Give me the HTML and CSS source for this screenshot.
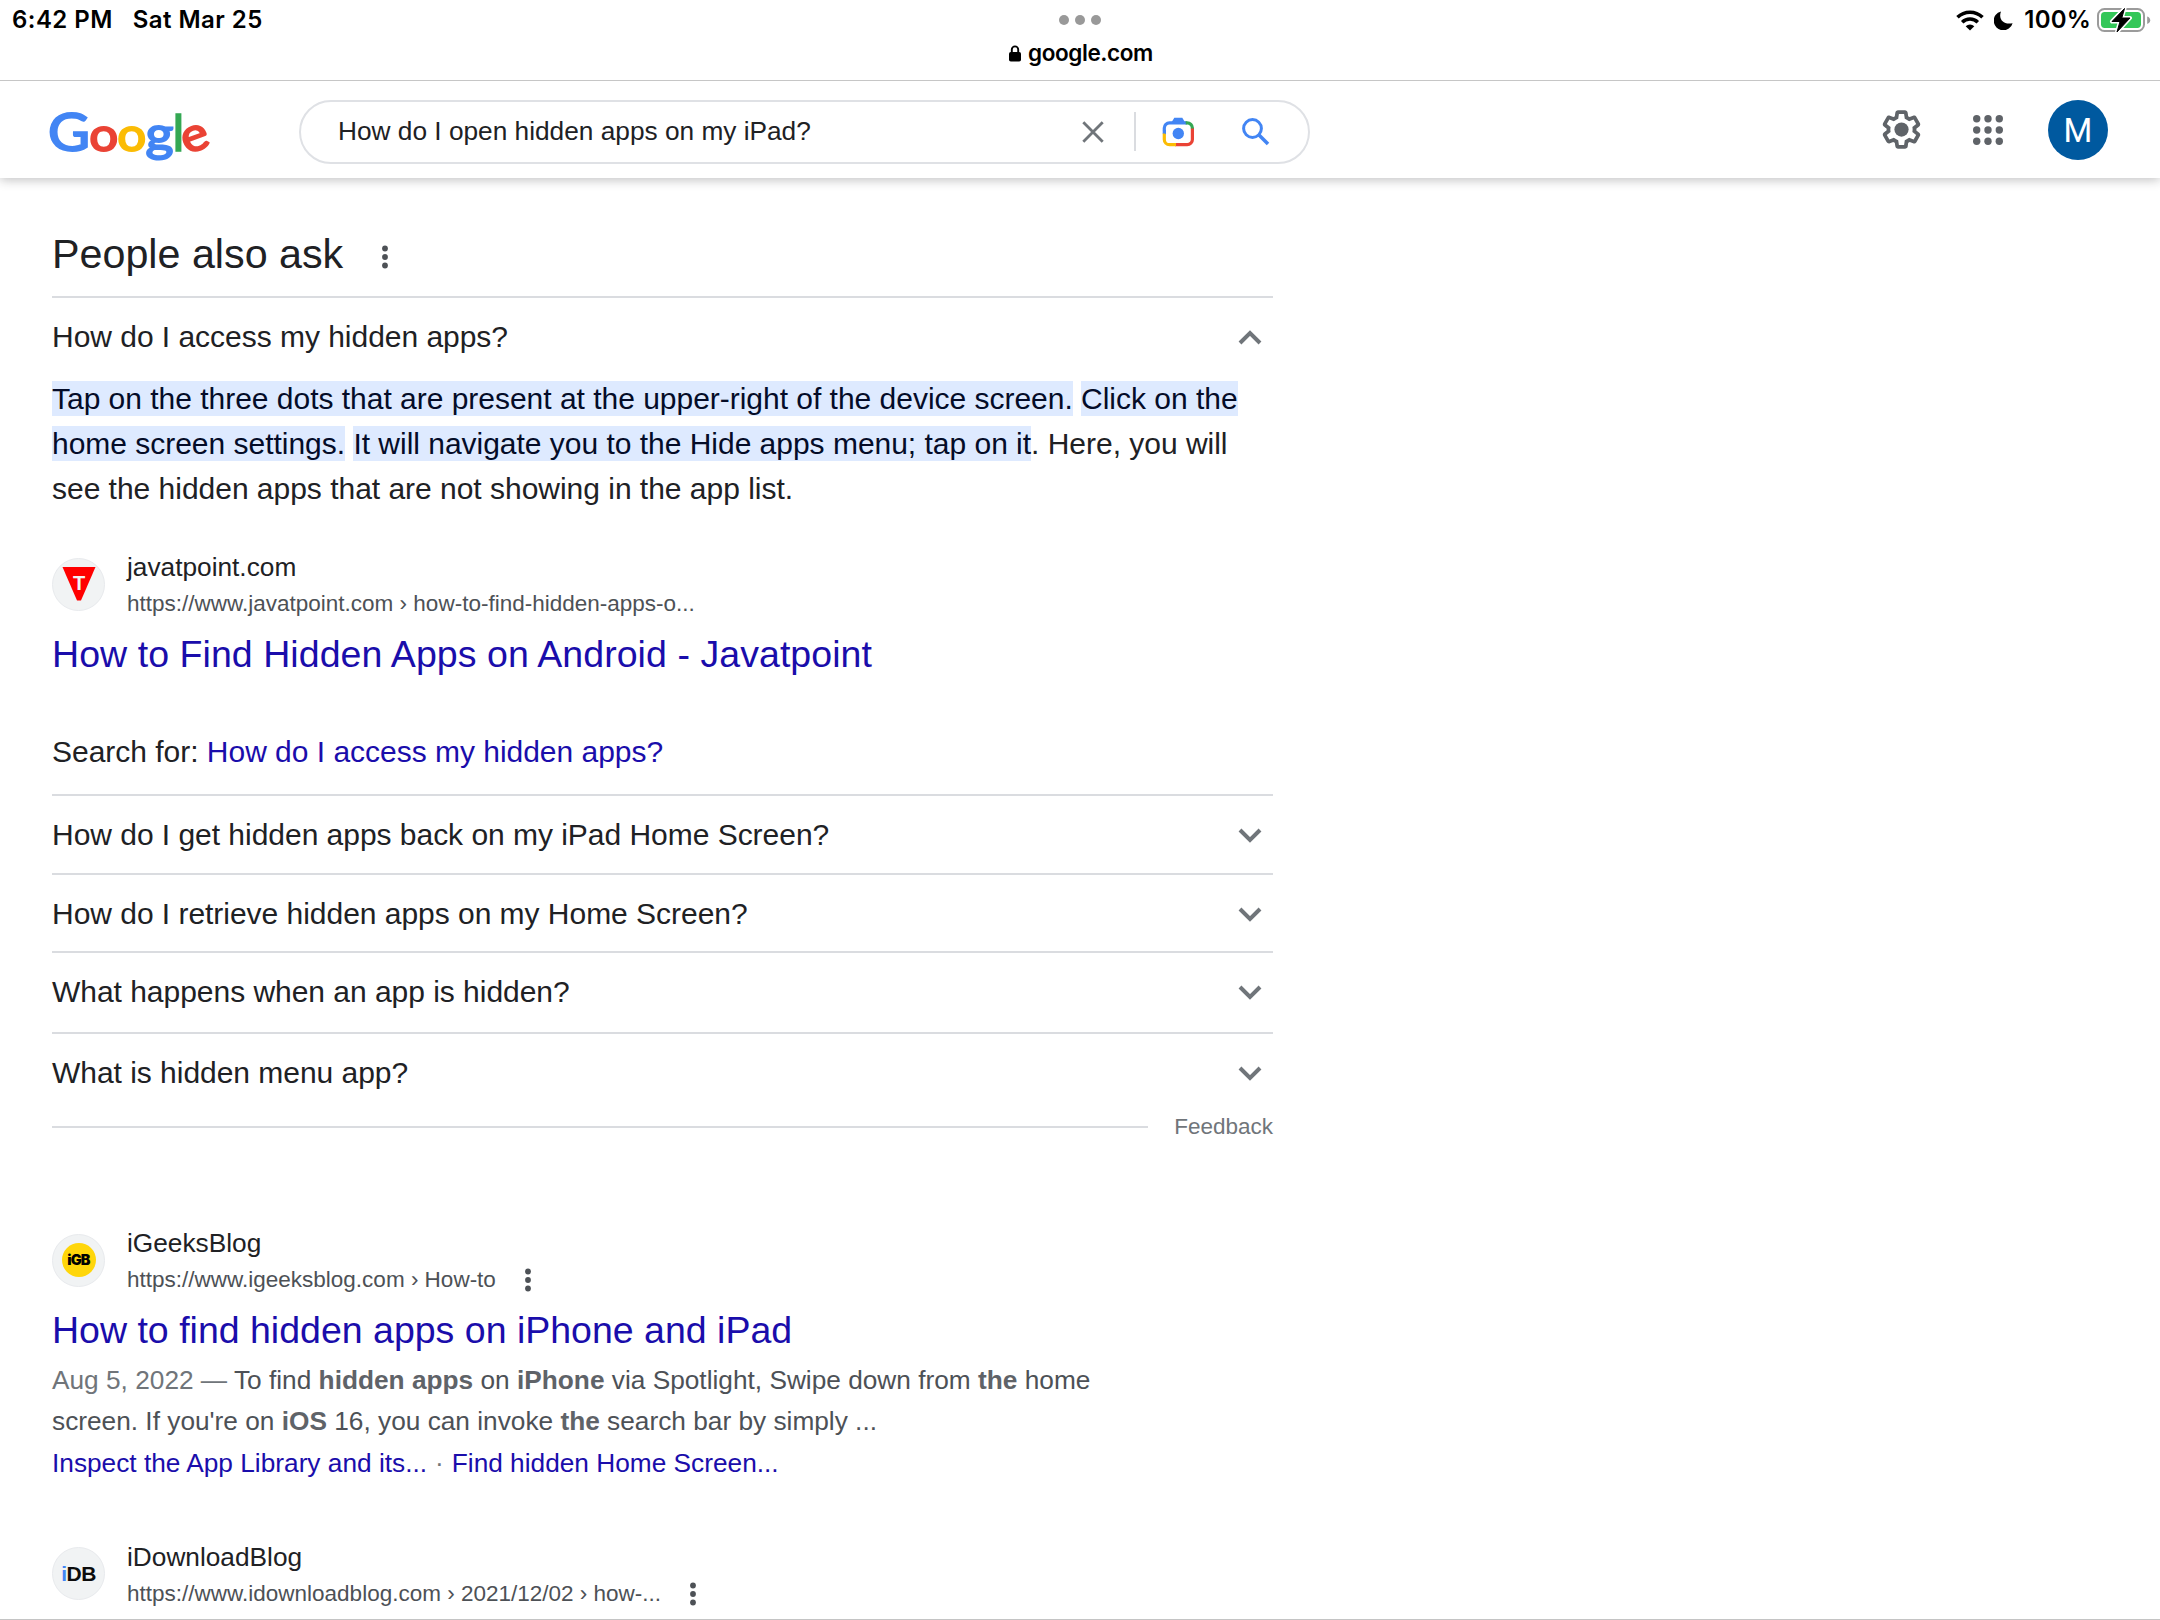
FILE: index.html
```html
<!DOCTYPE html>
<html lang="en">
<head>
<meta charset="utf-8">
<title>How do I open hidden apps on my iPad? - Google Search</title>
<link rel="stylesheet" href="styles.css">
</head>
<body>
<div class="screen">
  <div class="browser-bar">
    <div class="clock"><span>6:42 PM</span><span>Sat Mar 25</span></div>
    <div class="address">
      <div class="tab-dots"><i></i><i></i><i></i></div>
      <div class="site">
        <svg class="lock" width="12" height="17" viewBox="0 0 12 17"><path d="M2.8 8V4.6a3.2 3.2 0 0 1 6.4 0V8" fill="none" stroke="#000" stroke-width="1.9"/><rect x="0" y="7" width="12" height="9.6" rx="1.8"/></svg>
        <span>google.com</span>
      </div>
    </div>
    <div class="indicators">
      <svg class="wifi" width="28" height="21" viewBox="0 0 28 21"><g fill="none" stroke="#000" stroke-width="3.5"><path d="M1.5 7.3a17.7 17.7 0 0 1 25 0"/><path d="M6.2 12.2a11 11 0 0 1 15.6 0"/></g><path d="M14 20.6 9.7 16.3a6.1 6.1 0 0 1 8.6 0z"/></svg>
      <svg class="moon" width="19" height="19" viewBox="0 0 19 19"><path d="M7 .4C4 8 9.500 14.300 18.600 12.200A9.600 9.600 0 1 1 7 .4z"/></svg>
      <span class="charge">100%</span>
      <svg class="battery" width="54" height="26" viewBox="0 0 54 26"><rect x="1" y="2" width="46" height="22" rx="6.500" fill="none" stroke="#9b9b9b" stroke-width="2"/><path d="M50.200 9.500q3 1 3 3.700t-3 3.700z" fill="#9b9b9b"/><rect x="4" y="5" width="40" height="16" rx="3.700" fill="#34c759"/><path d="M27.500 1.500 15 14.500h8L20 25 33 11h-8.200z" stroke="#fff" stroke-width="4" stroke-linejoin="round"/><path d="M27.500 1.500 15 14.500h8L20 25 33 11h-8.200z" stroke="#000" stroke-width="1" stroke-linejoin="round"/></svg>
    </div>
  </div>

  <header class="header">
    <svg class="logo" width="162" height="60" viewBox="0 0 162 60" role="img" aria-label="Google">
      <text class="logo-cap c-blue" x="-2" y="44.500" textLength="42" lengthAdjust="spacingAndGlyphs">G</text>
      <text class="logo-low c-red" x="39.300" y="44.500" textLength="29" lengthAdjust="spacingAndGlyphs">o</text>
      <text class="logo-low c-yellow" x="67.300" y="44.500" textLength="29" lengthAdjust="spacingAndGlyphs">o</text>
      <text class="logo-g c-blue" x="95.500" y="44.500" textLength="28" lengthAdjust="spacingAndGlyphs">g</text>
      <text class="logo-l c-green" x="122.500" y="45">l</text>
      <text class="logo-low c-red" x="131.500" y="44.500" textLength="27" lengthAdjust="spacingAndGlyphs" transform="rotate(-20 145.500 32.500)">e</text>
    </svg>
    <div class="search-box">
      <span class="query">How do I open hidden apps on my iPad?</span>
      <svg class="clear" width="22" height="22" viewBox="0 0 22 22"><path d="M1.300 1.300 20.700 20.700M20.700 1.300 1.300 20.700" stroke="#70757a" stroke-width="2.800"/></svg>
      <span class="divider"></span>
      <svg class="lens" width="33" height="30" viewBox="0 0 33 30"><g fill="none" stroke-width="3.200"><path d="M2.300 17V11a5.200 5.200 0 0 1 5.200-5.200H25" stroke="#4285f4"/><path d="M23.500 5.800h1.700a5.200 5.200 0 0 1 5.200 5.200v1" stroke="#34a853"/><path d="M30.400 11.500v10.900a5.200 5.200 0 0 1-5.200 5.200H13" stroke="#ea4335"/><path d="M14 27.600H7.500a5.200 5.200 0 0 1-5.200-5.200V16.500" stroke="#fbbc04"/></g><path d="M8.500 7 12.300.8h8L24 7z" fill="#4285f4"/><path d="M.7 13 4 17.500V13z" fill="#4285f4"/><circle cx="16.300" cy="16.500" r="5.700" fill="#4285f4"/></svg>
      <svg class="magnifier" width="28" height="28" viewBox="0 0 28 28"><circle cx="10.500" cy="10.500" r="8.900" fill="none" stroke="#4285f4" stroke-width="3"/><path d="M17 17 26 26" stroke="#4285f4" stroke-width="3.600"/></svg>
    </div>
    <div class="account">
      <svg width="45" height="45" viewBox="0 0 24 24" fill="#5f6368"><path d="M13.850 22.250h-3.700c-.74 0-1.360-.54-1.450-1.270l-.27-1.890c-.27-.14-.53-.29-.79-.46l-1.800.72c-.7.26-1.470-.03-1.810-.65L2.200 15.530c-.35-.66-.2-1.440.36-1.880l1.530-1.190c-.01-.15-.02-.3-.02-.46 0-.15.01-.31.02-.46l-1.520-1.190c-.59-.45-.74-1.260-.37-1.880l1.850-3.190c.34-.62 1.110-.9 1.790-.63l1.810.73c.26-.17.52-.32.78-.46l.27-1.910c.09-.7.71-1.250 1.440-1.250h3.700c.74 0 1.360.54 1.450 1.270l.27 1.890c.27.14.53.29.79.46l1.800-.72c.71-.26 1.480.03 1.820.65l1.840 3.180c.36.66.2 1.440-.36 1.880l-1.520 1.190c.01.15.02.3.02.46s-.01.31-.02.46l1.520 1.190c.56.45.72 1.230.37 1.860l-1.860 3.220c-.34.62-1.110.9-1.800.63l-1.800-.72c-.26.17-.52.32-.78.46l-.27 1.910c-.1.68-.72 1.220-1.460 1.220zm-3.230-2h2.760l.37-2.550.53-.22c.44-.18.88-.44 1.340-.78l.45-.34 2.380.96 1.380-2.400-2.030-1.580.07-.56c.03-.26.06-.51.06-.78s-.03-.53-.06-.78l-.07-.56 2.030-1.580-1.390-2.400-2.390.96-.45-.35c-.42-.32-.87-.58-1.330-.77l-.52-.22-.37-2.550h-2.760l-.37 2.550-.53.21c-.44.19-.88.44-1.340.79l-.45.33-2.380-.95-1.390 2.390 2.030 1.580-.07.56a7 7 0 0 0-.06.79c0 .26.02.53.06.78l.07.56-2.030 1.580 1.380 2.400 2.390-.96.45.35c.43.33.86.58 1.330.77l.53.22.38 2.550z"/><circle cx="12" cy="12" r="3.800"/></svg>
      <svg class="grid" width="30" height="30" viewBox="0 0 30 30" fill="#5f6368"><circle cx="3.700" cy="3.700" r="3.700"/><circle cx="15" cy="3.700" r="3.700"/><circle cx="26.300" cy="3.700" r="3.700"/><circle cx="3.700" cy="15" r="3.700"/><circle cx="15" cy="15" r="3.700"/><circle cx="26.300" cy="15" r="3.700"/><circle cx="3.700" cy="26.300" r="3.700"/><circle cx="15" cy="26.300" r="3.700"/><circle cx="26.300" cy="26.300" r="3.700"/></svg>
      <span class="avatar">M</span>
    </div>
  </header>

  <main class="results">
    <section class="also-ask">
      <h2 class="heading">People also ask <svg class="more" width="6" height="24" viewBox="0 0 6 24"><circle cx="3" cy="3.500" r="2.900"/><circle cx="3" cy="12" r="2.900"/><circle cx="3" cy="20.500" r="2.900"/></svg></h2>
      <div class="question open"><span>How do I access my hidden apps?</span><svg class="chevron" width="24" height="15" viewBox="0 0 24 15"><path d="M2 13 12 3 22 13"/></svg></div>
      <p class="answer"><mark>Tap on the three dots that are present at the upper-right of the device screen.</mark> <mark>Click on the<br>home screen settings.</mark> <mark>It will navigate you to the Hide apps menu; tap on it</mark>. Here, you will<br>see the hidden apps that are not showing in the app list.</p>
      <div class="source">
        <span class="favicon"><svg width="34" height="34" viewBox="0 0 34 34"><path d="M.5 0h33L19 33.500h-4z" fill="#f00"/><text class="jt" x="17" y="22.500" text-anchor="middle">T</text></svg></span>
        <div class="source-text"><div class="name">javatpoint.com</div><div class="url">https://www.javatpoint.com › how-to-find-hidden-apps-o...</div></div>
      </div>
      <a class="title wide">How to Find Hidden Apps on Android - Javatpoint</a>
      <p class="search-for">Search for: <a>How do I access my hidden apps?</a></p>
      <div class="question q1"><span>How do I get hidden apps back on my iPad Home Screen?</span><svg class="chevron" width="24" height="15" viewBox="0 0 24 15"><path d="M2 2 12 12 22 2"/></svg></div>
      <div class="question q2"><span>How do I retrieve hidden apps on my Home Screen?</span><svg class="chevron" width="24" height="15" viewBox="0 0 24 15"><path d="M2 2 12 12 22 2"/></svg></div>
      <div class="question q3"><span>What happens when an app is hidden?</span><svg class="chevron" width="24" height="15" viewBox="0 0 24 15"><path d="M2 2 12 12 22 2"/></svg></div>
      <div class="question q4"><span>What is hidden menu app?</span><svg class="chevron" width="24" height="15" viewBox="0 0 24 15"><path d="M2 2 12 12 22 2"/></svg></div>
      <div class="feedback"><span class="rule"></span><span>Feedback</span></div>
    </section>

    <article class="result">
      <div class="source">
        <span class="favicon"><span class="igb">iGB</span></span>
        <div class="source-text"><div class="name">iGeeksBlog</div><div class="url">https://www.igeeksblog.com › How-to <svg class="more" width="6" height="24" viewBox="0 0 6 24"><circle cx="3" cy="3.500" r="2.900"/><circle cx="3" cy="12" r="2.900"/><circle cx="3" cy="20.500" r="2.900"/></svg></div></div>
      </div>
      <a class="title">How to find hidden apps on iPhone and iPad</a>
      <p class="snippet"><span class="date">Aug 5, 2022 — </span>To find <b>hidden apps</b> on <b>iPhone</b> via Spotlight, Swipe down from <b>the</b> home<br>screen. If you're on <b>iOS</b> 16, you can invoke <b>the</b> search bar by simply ...<br><a>Inspect the App Library and its...</a><span class="sep">·</span><a>Find hidden Home Screen...</a></p>
    </article>

    <article class="result third">
      <div class="source">
        <span class="favicon"><span class="idb"><span>i</span>DB</span></span>
        <div class="source-text"><div class="name">iDownloadBlog</div><div class="url">https://www.idownloadblog.com › 2021/12/02 › how-... <svg class="more" width="6" height="24" viewBox="0 0 6 24"><circle cx="3" cy="3.500" r="2.900"/><circle cx="3" cy="12" r="2.900"/><circle cx="3" cy="20.500" r="2.900"/></svg></div></div>
      </div>
    </article>
  </main>
</div>
</body>
</html>
```
FILE: styles.css
```css
* { box-sizing: border-box; }

body {
  margin: 0;
  background: #fff;
  color: #202124;
  font-family: "Liberation Sans", Arial, sans-serif;
}

svg { display: block; flex: none; }
p, h2 { margin: 0; font-weight: 400; }
a { color: #1a0dab; }

.screen {
  height: 1620px;
  overflow: hidden;
  display: flex;
  flex-direction: column;
  border-bottom: 1px solid #c4c4c4;
}

/* Browser bar */
.browser-bar {
  flex: none;
  position: relative;
  z-index: 1;
  background: #fff;
  height: 81px;
  border-bottom: 1px solid #c6c6c6;
  display: grid;
  grid-template-columns: 1fr auto 1fr;
  font-family: Inter, sans-serif;
  font-weight: 600;
  font-size: 24px;
  line-height: 40px;
  color: #000;
}

.clock { display: flex; gap: 20px; padding-left: 12px; letter-spacing: .45px; }
.address { padding-top: 15px; }
.tab-dots { display: flex; justify-content: center; gap: 6px; }
.tab-dots i { width: 10px; height: 10px; border-radius: 50%; background: #999; }
.site { display: flex; align-items: center; gap: 7px; height: 30px; margin-top: 13px; padding-left: 2px; font-size: 22.5px; letter-spacing: -.4px; }
.indicators { display: flex; justify-content: flex-end; align-items: center; height: 40px; padding-right: 9px; }
.moon { margin-left: 10px; }
.charge { margin-left: 11px; letter-spacing: .2px; }
.battery { margin-left: 6px; }

/* Search header */
.header {
  flex: none;
  height: 97px;
  display: flex;
  align-items: center;
  padding-left: 50px;
  box-shadow: 0 2px 10px rgba(32, 33, 36, .28);
}

.logo { margin-top: 12px; overflow: visible; font-family: Lato, sans-serif; }
.logo-cap { font-size: 52px; stroke-width: 2px; }
.logo-low { font-size: 47px; stroke-width: 2px; }
.logo-g { font-size: 49px; stroke-width: 2px; }
.logo-l { font-size: 50px; stroke-width: 1.5px; }
.c-blue { fill: #4285f4; stroke: #4285f4; }
.c-red { fill: #ea4335; stroke: #ea4335; }
.c-yellow { fill: #fbbc05; stroke: #fbbc05; }
.c-green { fill: #34a853; stroke: #34a853; }

.search-box {
  width: 1011px;
  height: 64px;
  margin-left: 87px;
  margin-top: 4px;
  padding: 0 38px 0 37px;
  border: 2px solid #dfe1e5;
  border-radius: 32px;
  display: flex;
  align-items: center;
  font-size: 26.25px;
}
.query { flex: 1; }
.divider { width: 2px; height: 39px; margin: 0 26px 0 30px; background: #dadce0; }
.magnifier { margin-left: 47px; }

.account { display: flex; align-items: center; margin-left: auto; padding-right: 52px; }
.grid { margin: 0 45px 0 49px; }
.avatar {
  width: 60px;
  height: 60px;
  border-radius: 50%;
  background: #00599f;
  color: #fff;
  font: 400 33px/62px Roboto, sans-serif;
  text-align: center;
}

/* Results */
.results { width: 1273px; padding: 46px 0 0 52px; }
.more { fill: #4d5156; }
.heading { display: flex; align-items: center; height: 60px; margin-bottom: 12px; font-size: 41.25px; line-height: 60px; }
.heading .more { margin: 5px 0 0 39px; }

.question {
  display: flex;
  align-items: flex-start;
  justify-content: space-between;
  border-top: 2px solid #dadce0;
  padding: 16px 11px 0 0;
  font-size: 30px;
  line-height: 45px;
  letter-spacing: -.03px;
  height: 79px;
}
.question.open { height: 80px; }
.q2 { height: 78px; }
.q3 { height: 81px; }
.chevron { margin-top: 16px; fill: none; stroke: #70757a; stroke-width: 4; }

.answer { font-size: 30px; line-height: 45px; letter-spacing: -.02px; }
mark { background: #deeaff; color: #040c28; padding: 1px 0; }

.source { display: flex; align-items: center; height: 71px; margin-top: 38px; }
.favicon {
  width: 53px;
  height: 53px;
  margin-right: 22px;
  margin-top: -1px;
  border: 1px solid #e8eaed;
  border-radius: 50%;
  background: #f1f3f4;
  display: flex;
  align-items: center;
  justify-content: center;
}
.jt { font: 700 20px "Liberation Sans", sans-serif; fill: #f1f3f4; }
.source-text { padding-top: 1px; }
.name { font-size: 26.25px; line-height: 37.5px; }
.url { display: flex; align-items: center; gap: 29px; font-size: 22.5px; line-height: 33.75px; color: #4d5156; }
.title { display: block; margin-top: 10px; font-size: 37.5px; line-height: 49px; }
.title.wide { letter-spacing: .06px; }
.search-for { margin: 50px 0 20px; font-size: 30px; line-height: 45px; letter-spacing: -.02px; }

.feedback { display: flex; align-items: center; gap: 26px; padding-top: 1px; font-size: 22.5px; line-height: 30px; color: #70757a; }
.rule { flex: 1; height: 2px; background: #dadce0; }

.result .source { margin-top: 83px; }
.result.third .source { margin-top: 55px; }
.snippet { margin-top: 5px; font-size: 26.25px; line-height: 41.25px; color: #4d5156; }
.snippet b { color: #5f6368; }
.date, .sep { color: #70757a; }
.sep { margin: 0 8px; }

.igb {
  width: 34px;
  height: 34px;
  border-radius: 50%;
  background: #ffd60a;
  color: #000;
  font: 900 14.5px/34px Inter, sans-serif;
  letter-spacing: -.8px;
  text-align: center;
}
.idb { font: 800 21px/34px "Liberation Sans", sans-serif; letter-spacing: -.5px; color: #0c0c0c; }
.idb span { color: #4285f4; }
```
